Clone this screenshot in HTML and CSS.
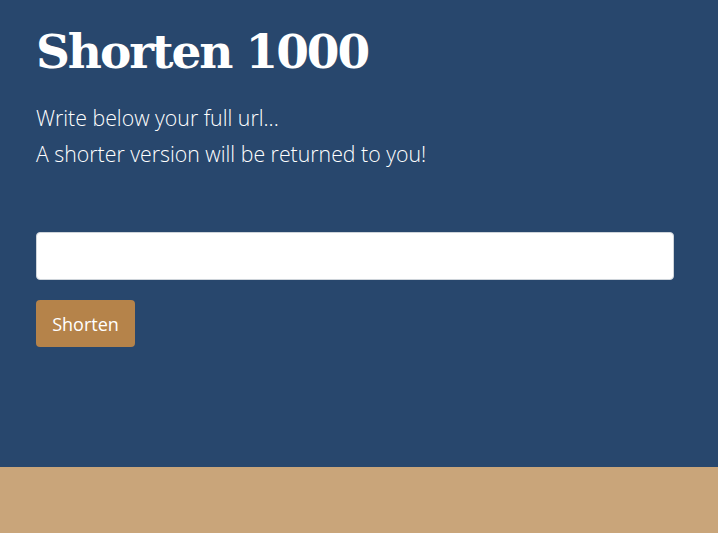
FILE: index.html
```html
<!DOCTYPE html>
<html lang="en">
<head>
<meta charset="utf-8">
<title>Shorten 1000</title>
<link rel="stylesheet" href="styles.css">
</head>
<body>
<main class="hero">
  <h1 class="title">Shorten 1000</h1>
  <p class="lead">Write below your full url...<br>A shorter version will be returned to you!</p>
  <form class="form">
    <input class="url-input" type="text" aria-label="Full url">
    <button class="btn" type="button">Shorten</button>
  </form>
</main>
<footer class="footer"></footer>
</body>
</html>
```
FILE: styles.css
```css
html, body {
  margin: 0;
  padding: 0;
}
body {
  background: #c9a57a;
  font-family: "Open Sans", "Liberation Sans", sans-serif;
  min-height: 533px;
}
.hero {
  background: #28476d;
  height: 467px;
  box-sizing: border-box;
  padding: 18px 44px 0 36px;
  color: #ffffff;
}
.title {
  margin: 0;
  font-family: "DejaVu Serif", "Liberation Serif", serif;
  font-weight: 700;
  font-size: 47px;
  line-height: 68px;
  letter-spacing: -2.1px;
}
.lead {
  margin: 14px 0 0;
  font-size: 21.3px;
  font-weight: 300;
  line-height: 36px;
}
.form {
  margin-top: 60px;
  display: flex;
  flex-direction: column;
  align-items: flex-start;
  gap: 20px;
}
.url-input {
  width: 638px;
  height: 48px;
  box-sizing: border-box;
  border: 1px solid #ced4da;
  border-radius: 4px;
  background: #fff;
  margin: 0;
}
.btn {
  width: 99px;
  height: 47px;
  background: #b5834a;
  color: #fff;
  border: 0;
  border-radius: 4px;
  font-family: "Open Sans", "Liberation Sans", sans-serif;
  font-size: 18px;
  padding: 0;
}
```
